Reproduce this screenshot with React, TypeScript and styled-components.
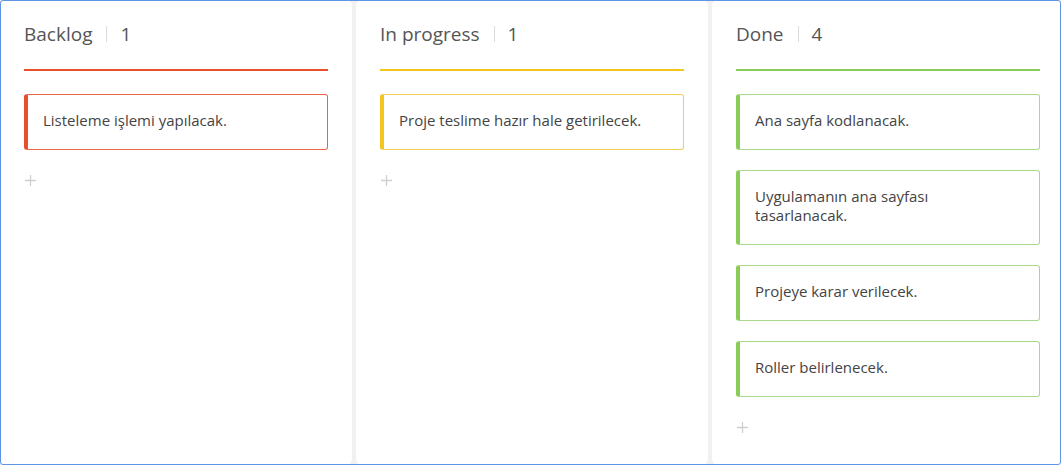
import React from "react";
import styled, { createGlobalStyle } from "styled-components";

const Global = createGlobalStyle`
  html, body { margin: 0; padding: 0; background: #f1f1f1; }
  body { font-family: "Open Sans", "Noto Sans", sans-serif; }
  * { box-sizing: border-box; }
`;

const Frame = styled.div`
  position: relative;
  width: 1061px;
  height: 465px;
  overflow: hidden;
  background: #f1f1f1;
  &::after {
    content: "";
    position: absolute;
    inset: 0;
    border: 1px solid #5f93e3;
    border-radius: 3px;
    pointer-events: none;
  }
`;

const Board = styled.div`
  display: grid;
  grid-template-columns: repeat(3, 352px);
  column-gap: 4px;
  height: 100%;
`;

const Column = styled.section`
  background: #fff;
  border-radius: 6px;
  padding: 22px 24px 0;
  height: 100%;
  display: flex;
  flex-direction: column;
`;

const Header = styled.div`
  display: flex;
  align-items: center;
  height: 24px;
  font-size: 19px;
  line-height: 24px;
  color: #555;
  margin-bottom: 23px;
`;

const Underline = styled.div<{ $color: string }>`
  height: 2px;
  background: ${(p) => p.$color};
  margin-bottom: 23px;
`;

const Divider = styled.span`
  display: inline-block;
  width: 1px;
  height: 16px;
  background: #dcdcdc;
  margin: 0 13px 0 14px;
`;

const Cards = styled.div`
  display: flex;
  flex-direction: column;
  gap: 20px;
`;

const Card = styled.div<{ $color: string; $border: string }>`
  border: 1px solid ${(p) => p.$border};
  border-left: 4px solid ${(p) => p.$color};
  border-radius: 3px;
  padding: 16px 30px 19px 15px;
  font-size: 15px;
  line-height: 19px;
  color: #444;
  background: #fff;
`;

const Add = styled.div`
  margin-top: 19px;
  margin-left: 1px;
  width: 12px;
  height: 22px;
  display: flex;
  align-items: center;
`;

type Col = { title: string; color: string; border: string; items: string[] };

const columns: Col[] = [
  { title: "Backlog", color: "#e84f2d", border: "#e8654a", items: ["Listeleme işlemi yapılacak."] },
  { title: "In progress", color: "#f5c51f", border: "#f1cf55", items: ["Proje teslime hazır hale getirilecek."] },
  {
    title: "Done",
    color: "#8bcb57",
    border: "#a9d98c",
    items: [
      "Ana sayfa kodlanacak.",
      "Uygulamanın ana sayfası tasarlanacak.",
      "Projeye karar verilecek.",
      "Roller belirlenecek.",
    ],
  },
];

const Plus = () => (
  <svg width="11" height="11" viewBox="0 0 11 11">
    <path d="M5.5 0v11M0 5.5h11" stroke="#cfcfcf" strokeWidth="1.3" />
  </svg>
);

export default function App() {
  return (
    <>
      <Global />
      <Frame>
        <Board>
          {columns.map((c) => (
            <Column key={c.title}>
              <Header>
                <span>{c.title}</span>
                <Divider />
                <span>{c.items.length}</span>
              </Header>
              <Underline $color={c.color} />
              <Cards>
                {c.items.map((t) => (
                  <Card key={t} $color={c.color} $border={c.border}>
                    {t}
                  </Card>
                ))}
              </Cards>
              <Add>
                <Plus />
              </Add>
            </Column>
          ))}
        </Board>
      </Frame>
    </>
  );
}
